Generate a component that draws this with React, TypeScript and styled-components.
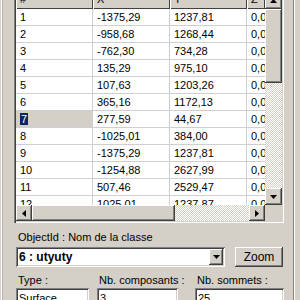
import styled, { createGlobalStyle } from "styled-components";

const Global = createGlobalStyle`
  html, body { margin: 0; padding: 0; background: #d4d0c8; }
  body {
    font-family: "Liberation Sans", Arial, sans-serif;
    font-size: 11px;
    color: #000;
  }
`;

const raised = `
  background: #d4d0c8;
  box-shadow: inset -1px -1px #404040, inset 1px 1px #ffffff,
    inset -2px -2px #808080, inset 2px 2px #d4d0c8;
`;

const sunken = `
  background: #ffffff;
  box-shadow: inset 1px 1px #808080, inset -1px -1px #ffffff,
    inset 2px 2px #404040, inset -2px -2px #d4d0c8;
`;

const checker = `
  background: repeating-conic-gradient(#d4d0c8 0 25%, #ffffff 0 50%) 0 0 / 2px 2px;
`;

const Screen = styled.div`
  width: 300px;
  height: 300px;
  overflow: hidden;
  background: #d4d0c8;
`;

const Frame = styled.div`
  box-sizing: border-box;
  width: 293px;
  height: 330px;
  margin: -8px 0 0 1px;
  border-left: 1px solid #ffffff;
  border-right: 1px solid #808080;
  box-shadow: inset 1px 0 #b8b4ac, 1px 0 #ffffff;
`;

const Grid = styled.div`
  box-sizing: border-box;
  width: 270px;
  margin-left: 12px;
  padding: 0 2px 2px 2px;
  display: grid;
  grid-template-columns: 249px 17px;
  grid-template-rows: 213px 16px;
  box-shadow: inset 1px 0 #808080, inset 2px 0 #404040,
    inset -1px -1px #ffffff, inset -2px -2px #d4d0c8;
`;

const Body = styled.div`
  overflow: hidden;
  background: #ffffff;
`;

const Row = styled.div`
  display: grid;
  grid-template-columns: 77px 77px 77px 18px;
  height: 17px;
`;

const HeadCell = styled.div`
  box-sizing: border-box;
  height: 17px;
  padding-left: 4px;
  line-height: 15px;
  white-space: nowrap;
  overflow: hidden;
  ${raised}
  box-shadow: inset 1px 1px #ffffff, inset -1px -1px #404040;
`;

const Cell = styled.div<{ $sel?: boolean; $last?: boolean }>`
  box-sizing: border-box;
  padding-left: 4px;
  line-height: 16px;
  white-space: nowrap;
  overflow: hidden;
  border-bottom: 1px solid #cfcfcf;
  border-right: ${(p) => (p.$last ? "none" : "1px solid #cfcfcf")};
  background: ${(p) => (p.$sel ? "#d4d0c8" : "#ffffff")};
`;

const Selected = styled.span`
  background: #0a246a;
  color: #ffffff;
  padding: 0 1px;
`;

const VScroll = styled.div`
  display: flex;
  flex-direction: column;
`;

const HScroll = styled.div`
  display: flex;
`;

const ArrowBtn = styled.div<{ $w: number; $h: number }>`
  flex: none;
  width: ${(p) => p.$w}px;
  height: ${(p) => p.$h}px;
  display: flex;
  align-items: center;
  justify-content: center;
  ${raised}
`;

const Thumb = styled.div<{ $w?: number; $h?: number }>`
  flex: none;
  width: ${(p) => (p.$w ? `${p.$w}px` : "auto")};
  height: ${(p) => (p.$h ? `${p.$h}px` : "auto")};
  ${raised}
`;

const Track = styled.div`
  flex: 1;
  ${checker}
`;

const Corner = styled.div`
  background: #d4d0c8;
`;

const Panel = styled.div`
  padding: 8px 0 0 14px;
`;

const Caption = styled.div`
  height: 13px;
  line-height: 13px;
  padding-left: 2px;
  white-space: nowrap;
`;

const ComboRow = styled.div`
  display: flex;
  gap: 10px;
  margin-top: 3px;
  height: 20px;
`;

const Combo = styled.div`
  box-sizing: border-box;
  width: 209px;
  height: 20px;
  padding: 2px 2px 2px 3px;
  display: flex;
  align-items: center;
  justify-content: space-between;
  ${sunken}
`;

const ComboText = styled.span`
  font-size: 12px;
  font-weight: bold;
  line-height: 16px;
`;

const Button = styled.div`
  box-sizing: border-box;
  width: 48px;
  height: 20px;
  display: flex;
  align-items: center;
  justify-content: center;
  font-size: 12px;
  ${raised}
`;

const Fields = styled.div`
  display: grid;
  grid-template-columns: 81px 98px 89px;
  margin-top: 7px;
`;

const FieldGroup = styled.div`
  display: flex;
  flex-direction: column;
`;

const FieldLabel = styled.div`
  height: 13px;
  line-height: 13px;
  padding-left: 2px;
  margin-bottom: 1px;
  white-space: nowrap;
`;

const Field = styled.div<{ $w: number }>`
  box-sizing: border-box;
  width: ${(p) => p.$w}px;
  height: 20px;
  padding: 2px 3px;
  line-height: 16px;
  ${sunken}
`;

type Dir = "up" | "down" | "left" | "right";

const Arrow = ({ dir }: { dir: Dir }) => {
  const pts = {
    up: "0,4 7,4 3.5,0",
    down: "0,0 7,0 3.5,4",
    left: "4,0 4,7 0,3.5",
    right: "0,0 0,7 4,3.5",
  }[dir];
  const vertical = dir === "up" || dir === "down";
  return (
    <svg width={vertical ? 7 : 4} height={vertical ? 4 : 7} viewBox={vertical ? "0 0 7 4" : "0 0 4 7"}>
      <polygon points={pts} fill="#000" />
    </svg>
  );
};

const points: [string, string, string][] = [
  ["1", "-1375,29", "1237,81"],
  ["2", "-958,68", "1268,44"],
  ["3", "-762,30", "734,28"],
  ["4", "135,29", "975,10"],
  ["5", "107,63", "1203,26"],
  ["6", "365,16", "1172,13"],
  ["7", "277,59", "44,67"],
  ["8", "-1025,01", "384,00"],
  ["9", "-1375,29", "1237,81"],
  ["10", "-1254,88", "2627,99"],
  ["11", "507,46", "2529,47"],
  ["12", "1025,01", "1237,87"],
];

const App = () => {
  return (
    <Screen>
      <Global />
      <Frame>
        <Grid>
          <Body>
            <Row>
              <HeadCell>#</HeadCell>
              <HeadCell>X</HeadCell>
              <HeadCell>Y</HeadCell>
              <HeadCell>Z</HeadCell>
            </Row>
            {points.map(([n, x, y]) => {
              const sel = n === "7";
              return (
                <Row key={n}>
                  <Cell $sel={sel}>{sel ? <Selected>{n}</Selected> : n}</Cell>
                  <Cell>{x}</Cell>
                  <Cell>{y}</Cell>
                  <Cell $last>0,00</Cell>
                </Row>
              );
            })}
          </Body>
          <VScroll>
            <ArrowBtn $w={17} $h={17}>
              <Arrow dir="up" />
            </ArrowBtn>
            <Thumb $h={74} />
            <Track />
            <ArrowBtn $w={17} $h={17}>
              <Arrow dir="down" />
            </ArrowBtn>
          </VScroll>
          <HScroll>
            <ArrowBtn $w={16} $h={16}>
              <Arrow dir="left" />
            </ArrowBtn>
            <Thumb $w={143} />
            <Track />
            <ArrowBtn $w={16} $h={16}>
              <Arrow dir="right" />
            </ArrowBtn>
          </HScroll>
          <Corner />
        </Grid>
        <Panel>
          <Caption>ObjectId : Nom de la classe</Caption>
          <ComboRow>
            <Combo>
              <ComboText>6 : utyuty</ComboText>
              <ArrowBtn $w={14} $h={16}>
                <Arrow dir="down" />
              </ArrowBtn>
            </Combo>
            <Button>Zoom</Button>
          </ComboRow>
          <Fields>
            <FieldGroup>
              <FieldLabel>Type :</FieldLabel>
              <Field $w={73}>Surface</Field>
            </FieldGroup>
            <FieldGroup>
              <FieldLabel>Nb. composants :</FieldLabel>
              <Field $w={81}>3</Field>
            </FieldGroup>
            <FieldGroup>
              <FieldLabel>Nb. sommets :</FieldLabel>
              <Field $w={89}>25</Field>
            </FieldGroup>
          </Fields>
        </Panel>
      </Frame>
    </Screen>
  );
};

export default App;
